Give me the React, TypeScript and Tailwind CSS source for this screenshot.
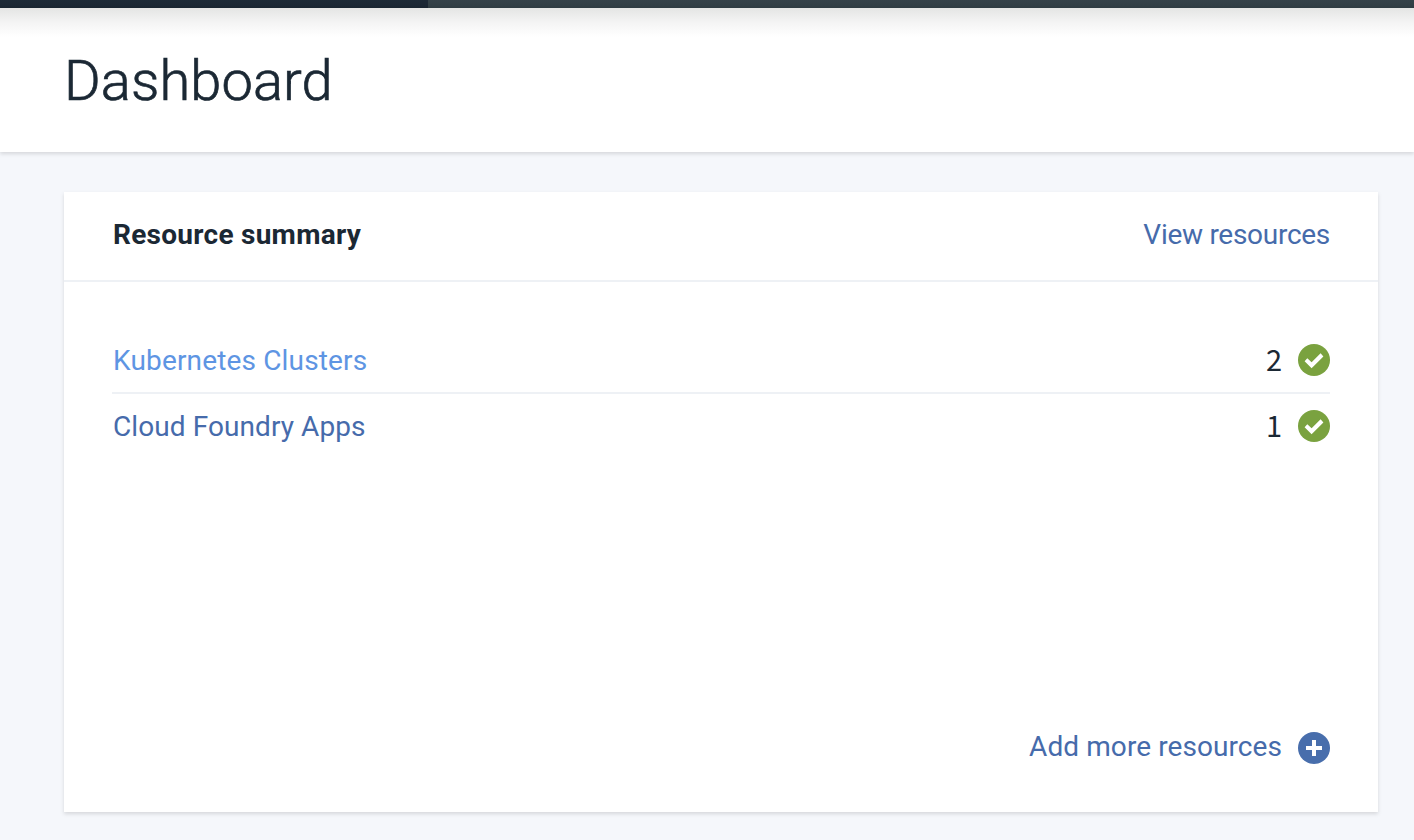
import React from "react";

type Resource = { name: string; count: number; style: string };

const resources: Resource[] = [
  { name: "Kubernetes Clusters", count: 2, style: "text-[#5e95e3] tracking-[0.16px]" },
  { name: "Cloud Foundry Apps", count: 1, style: "text-[#466bab] tracking-[0.08px]" },
];

function CheckIcon() {
  return (
    <svg className="h-8 w-8 shrink-0" viewBox="0 0 32 32" aria-hidden="true">
      <circle cx="16" cy="16" r="16" fill="#7aa23f" />
      <path d="M9.3 14.3L6.6 17.2L13.6 24.2L25.4 12.4L22.6 9.2L13.6 18.3Z" fill="#fff" />
    </svg>
  );
}

function PlusIcon() {
  return (
    <svg className="h-8 w-8 shrink-0" viewBox="0 0 32 32" aria-hidden="true">
      <circle cx="16" cy="16" r="16" fill="#486eac" />
      <path d="M14 8h4v6h6v4h-6v6h-4v-6H8v-4h6z" fill="#fff" />
    </svg>
  );
}

export default function App() {
  return (
    <div className="flex h-[840px] w-full flex-col overflow-hidden bg-[#f5f7fb] font-['Roboto',sans-serif] text-[28px] leading-9 text-[#1b2834]">
      <div className="flex h-2 shrink-0">
        <div className="w-[428px] bg-linear-to-b from-[#1d2a37] to-[#1a2632]" />
        <div className="flex-1 bg-linear-to-b from-[#354249] to-[#303d43]" />
      </div>
      <header className="h-36 shrink-0 bg-white bg-linear-to-b from-[#e4e5e4] from-0% via-[#f4f4f4] via-10% to-white to-20% pl-16 shadow-[0_2px_4px_rgba(0,0,0,0.13)]">
        <h1 className="w-fit pt-[37px] text-[56px] leading-[72px] font-light tracking-[0.1px] [-webkit-text-stroke:0.7px_#1b2834]">Dashboard</h1>
      </header>
      <main className="flex flex-1 pt-10 pr-9 pb-7 pl-16">
        <section className="flex flex-1 flex-col bg-white shadow-[0_2px_4px_rgba(0,0,0,0.13)]">
          <div className="flex h-[90px] items-start justify-between border-b-2 border-[#eef1f5] px-12 pt-[25px]">
            <h2 className="pl-px font-bold tracking-[0.27px]">Resource summary</h2>
            <a className="tracking-[-0.28px] text-[#466bab]">View resources</a>
          </div>
          <div className="px-12 pt-[46px]">
            {resources.map((r) => (
              <div key={r.name} className="flex h-[66px] items-center border-b-2 border-[#eef1f5] last:h-16 last:border-b-0">
                <a className={`flex-1 pt-0.5 pl-px ${r.style}`}>{r.name}</a>
                <span className="mr-4 pb-[5px] font-['Noto_Sans_CJK_JP',sans-serif] text-[29px]">{r.count}</span>
                <CheckIcon />
              </div>
            ))}
          </div>
          <div className="mt-auto flex items-center justify-end gap-4 px-12 pb-[45px]">
            <a className="pb-0.5 tracking-[0.08px] text-[#466bab]">Add more resources</a>
            <PlusIcon />
          </div>
        </section>
      </main>
    </div>
  );
}
